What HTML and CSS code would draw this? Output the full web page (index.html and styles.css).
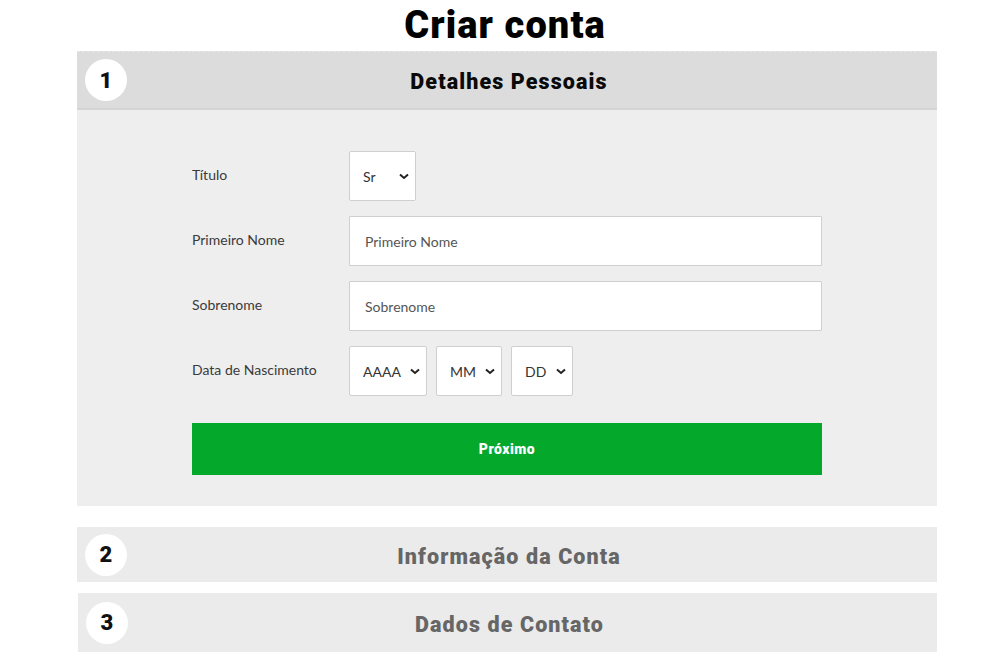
FILE: index.html
```html
<!DOCTYPE html>
<html lang="pt">
<head>
<meta charset="utf-8">
<title>Criar conta</title>
<link rel="stylesheet" href="styles.css">
</head>
<body>
<h1 class="title">Criar conta</h1>
<div class="steps">
  <section class="step step-active">
    <div class="step-head">
      <span class="step-num">1</span>
      <span class="step-title">Detalhes Pessoais</span>
    </div>
    <div class="step-body">
      <form class="form">
        <div class="row">
          <label class="label">Título</label>
          <select class="sel sel-title"><option>Sr</option></select>
        </div>
        <div class="row">
          <label class="label">Primeiro Nome</label>
          <input class="inp" type="text" placeholder="Primeiro Nome">
        </div>
        <div class="row">
          <label class="label">Sobrenome</label>
          <input class="inp" type="text" placeholder="Sobrenome">
        </div>
        <div class="row row-last">
          <label class="label">Data de Nascimento</label>
          <div class="dates">
            <select class="sel sel-year"><option>AAAA</option></select>
            <select class="sel sel-month"><option>MM</option></select>
            <select class="sel sel-day"><option>DD</option></select>
          </div>
        </div>
        <button type="button" class="btn">Próximo</button>
      </form>
    </div>
  </section>
  <section class="step step-closed step-2">
    <div class="step-head">
      <span class="step-num">2</span>
      <span class="step-title">Informação da Conta</span>
    </div>
  </section>
  <section class="step step-closed step-3">
    <div class="step-head">
      <span class="step-num">3</span>
      <span class="step-title">Dados de Contato</span>
    </div>
  </section>
</div>
</body>
</html>
```
FILE: styles.css
```css
* { box-sizing: border-box; }
html, body { margin: 0; padding: 0; background: #fff; }
body { font-family: Lato, "Liberation Sans", sans-serif; color: #111; }

.title {
  margin: 0;
  height: 51px;
  padding-top: 3px;
  text-align: center;
  font-family: Roboto, Lato, sans-serif;
  font-weight: 900;
  font-size: 38px;
  line-height: 44px;
  letter-spacing: 1.1px;
  color: #000;
  padding-left: 10px;
}

.steps { width: 860px; margin-left: 77px; }

.step-head {
  position: relative;
  display: flex;
  align-items: center;
  justify-content: center;
}
.step-num {
  position: absolute;
  left: 8px;
  top: 50%;
  margin-top: -21px;
  width: 42px;
  height: 42px;
  border-radius: 50%;
  background: #fff;
  display: flex;
  align-items: center;
  justify-content: center;
  font-family: Roboto, sans-serif;
  font-weight: 900;
  font-size: 22px;
  color: #111;
}
.step-title {
  font-family: Roboto, Lato, sans-serif;
  font-weight: 900;
  font-size: 21.5px;
  letter-spacing: 1.1px;
  padding-left: 4px;
}

.step-active .step-head {
  height: 59px;
  background: #dcdcdc;
  border-top: 1px dashed #e6e6e6;
  border-bottom: 2px solid #d4d4d4;
}
.step-active .step-title { color: #0a0a0a; padding-top: 2px; }
.step-body { background: #eeeeee; height: 396px; padding-top: 41px; }

.form { width: 630px; margin-left: 115px; }
.row { display: flex; align-items: center; height: 50px; margin-bottom: 15px; }
.row-last { margin-bottom: 27px; }
.label { width: 157px; font-size: 14px; color: #3a3a3a; font-weight: 400; padding-bottom: 4px; }

.inp {
  width: 473px;
  height: 50px;
  border: 1px solid #cfcfcf;
  background: #fff;
  padding: 0 15px;
  font-family: Lato, sans-serif;
  font-size: 14px;
  color: #222;
  outline: none;
  border-radius: 1px;
}
.inp::placeholder { color: #555; }

.sel {
  appearance: none;
  -webkit-appearance: none;
  height: 50px;
  border: 1px solid #cfcfcf;
  border-radius: 2px;
  background: #fff url("data:image/svg+xml;utf8,<svg xmlns='http://www.w3.org/2000/svg' width='10' height='7' viewBox='0 0 10 7'><path d='M1 1.5 L5 5 L9 1.5' fill='none' stroke='%23222' stroke-width='2'/></svg>") no-repeat right 6px center;
  padding: 0 0 0 13px;
  font-family: Lato, sans-serif;
  font-size: 14px;
  color: #333;
}
.sel-title { width: 67px; }
.dates { display: flex; gap: 9px; }
.sel-year { width: 78px; }
.sel-month { width: 66px; }
.sel-day { width: 62px; }

.btn {
  display: block;
  width: 630px;
  height: 52px;
  margin: 0;
  border: none;
  background: #04a82a;
  color: #fff;
  font-family: Roboto, sans-serif;
  font-weight: 900;
  font-size: 14px;
  letter-spacing: 0.5px;
}

.step-closed .step-head { background: #ebebeb; }
.step-closed .step-title { color: #666; padding-top: 4px; }
.step-2 { margin-top: 21px; }
.step-2 .step-head { height: 55px; }
.step-3 { margin-top: 11px; margin-left: 1px; }
.step-3 .step-head { height: 59px; }
```
